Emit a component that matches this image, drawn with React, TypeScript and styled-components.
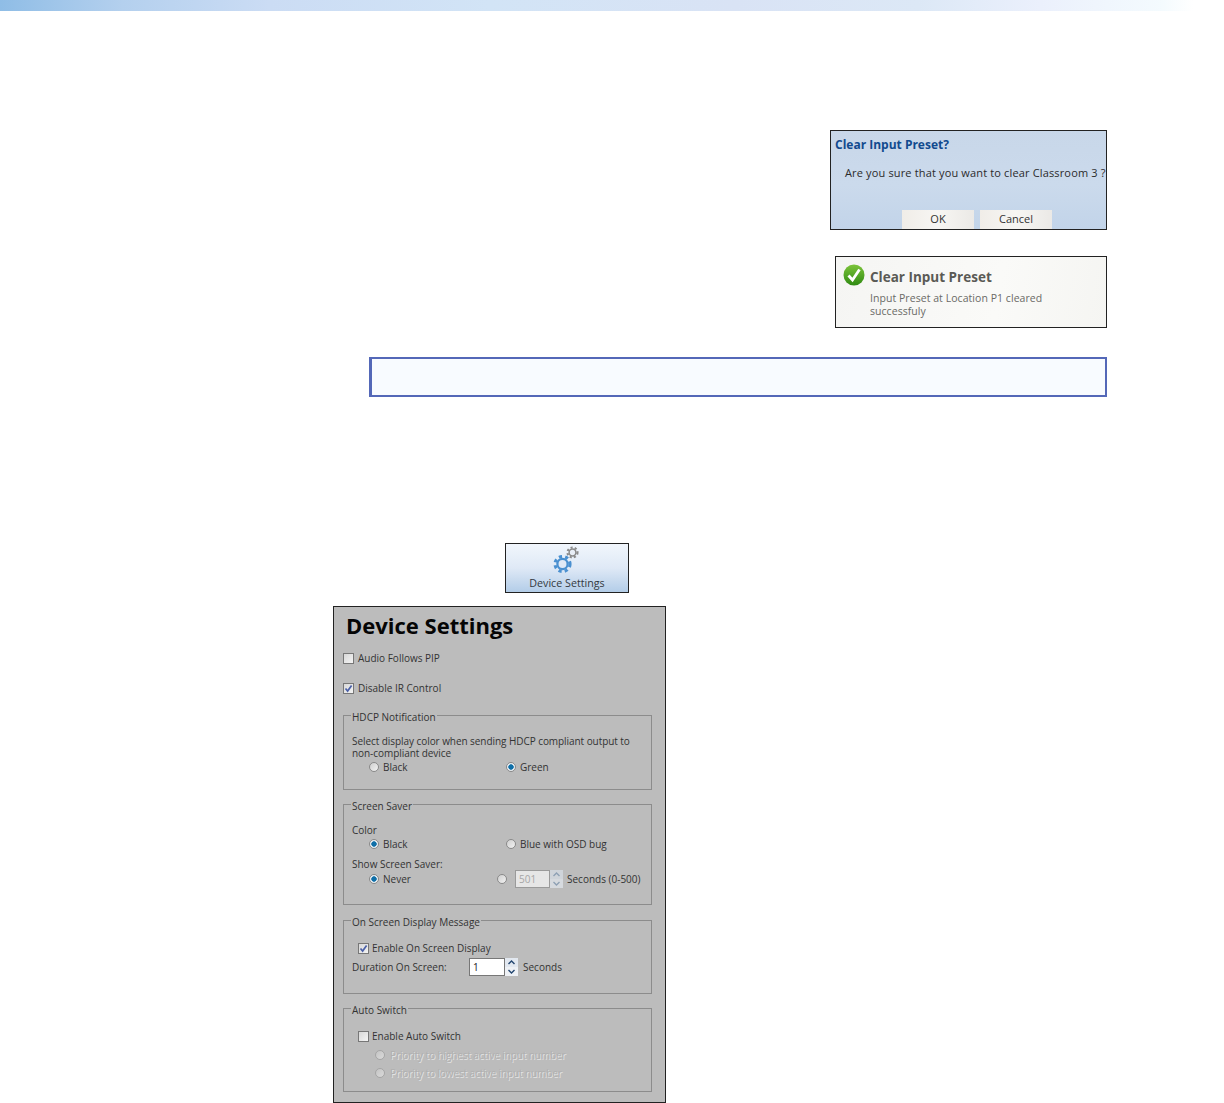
import React from 'react';
import styled, { createGlobalStyle } from 'styled-components';

const Global = createGlobalStyle`
  html, body { margin: 0; padding: 0; background: #fff; }
  body { font-family: "Open Sans", "DejaVu Sans", sans-serif; overflow: hidden; }
`;

const Page = styled.div`
  display: flex;
  flex-direction: column;
  height: 1103px;
`;
const TopBand = styled.div`
  height: 11px;
  background: linear-gradient(90deg, #8fbde6 0%, #b4d0ee 10%, #cbdcf4 22%, #d2e4f6 40%, #d9e3f5 60%, #dce8f6 75%, #ebf0fc 85%, #f4fbfe 95%, #fff 97.5%);
`;
const Dialog = styled.div`
  box-sizing: border-box;
  align-self: flex-end;
  margin: 119px 117px 0 0;
  width: 277px;
  height: 100px;
  border: 1px solid #222;
  background: linear-gradient(180deg, #c8d7e9 0%, #cbdaec 55%, #c2d4e9 100%);
  overflow: hidden;
  white-space: nowrap;
`;
const DialogTitle = styled.div`
  margin: 6px 0 0 4px;
  font-size: 12px;
  line-height: 15px;
  font-weight: 700;
  color: #124a8e;
`;
const DialogText = styled.div`
  margin: 14px 0 0 14px;
  font-size: 11px;
  line-height: 14px;
  letter-spacing: 0.15px;
  color: #2b2b2b;
`;
const DialogActions = styled.div`
  display: flex;
  gap: 6px;
  margin: 30px 0 0 71px;
`;
const DialogButton = styled.div`
  box-sizing: border-box;
  width: 72px;
  height: 20px;
  padding-bottom: 3px;
  display: flex;
  align-items: center;
  justify-content: center;
  font-size: 11px;
  color: #333;
  background: linear-gradient(90deg, #f0ede8 0%, #f7f6f3 50%, #ebe9e6 100%);
`;
const Toast = styled.div`
  box-sizing: border-box;
  align-self: flex-end;
  margin: 26px 117px 0 0;
  width: 272px;
  height: 72px;
  border: 1px solid #222;
  background: linear-gradient(100deg, #f5f5f3 0%, #fafaf8 60%, #f5f5f2 100%);
  display: grid;
  grid-template-columns: 27px 1fr;
  padding: 7px 0 0 7px;
`;
const ToastBody = styled.div`
  padding-top: 5px;
`;
const ToastTitle = styled.div`
  font-size: 13.5px;
  line-height: 16px;
  font-weight: 700;
  color: #5a5a55;
`;
const ToastText = styled.div`
  margin-top: 7px;
  width: 190px;
  font-size: 10.5px;
  line-height: 13px;
  letter-spacing: 0.05px;
  color: #6a6a66;
`;
const Note = styled.div`
  box-sizing: border-box;
  margin: 29px 117px 0 369px;
  height: 40px;
  border: solid #5468b8;
  border-width: 2px 2px 2px 3px;
  background: #f8fbff;
`;
const DeviceTab = styled.div`
  box-sizing: border-box;
  margin: 146px 0 0 505px;
  width: 124px;
  height: 50px;
  border: 1px solid #222;
  background: linear-gradient(180deg, #f1f6fc 0%, #dfe9f6 50%, #b3cde8 100%);
  display: flex;
  flex-direction: column;
  align-items: center;
  font-size: 10.7px;
  line-height: 12px;
  color: #33393f;
`;
const TabIcon = styled.svg`
  width: 32px;
  height: 30px;
  margin: 2px 3px 1px 0;
`;
const Panel = styled.div`
  box-sizing: border-box;
  margin: 13px 0 0 333px;
  width: 333px;
  height: 497px;
  border: 1px solid #222;
  background: #bcbcbc;
  padding: 4px 13px 0 9px;
  display: flex;
  flex-direction: column;
  color: #333;
  font-size: 10px;
  line-height: 12px;
`;
const Heading = styled.h1`
  margin: 0 0 0 3px;
  height: 30px;
  font-size: 22px;
  line-height: 28px;
  font-weight: 700;
  color: #050505;
`;
const TopOption = styled.label<{ $mt: number }>`
  display: flex;
  align-items: center;
  gap: 4px;
  height: 12px;
  margin-top: ${p => p.$mt}px;
`;
const Group = styled.fieldset<{ $mt: number; $pb: number }>`
  margin: ${p => p.$mt}px 0 0;
  padding: 0 8px ${p => p.$pb}px;
  border: 1px solid #8c8c8c;
  min-width: 0;
`;
const GroupTitle = styled.legend`
  padding: 4px 1px 0;
  margin-left: -1px;
  line-height: 12px;
  height: 16px;
  box-sizing: border-box;
`;
const Line = styled.div<{ $mt?: number }>`
  margin-top: ${p => p.$mt ?? 0}px;
  line-height: 12px;
`;
const WrappedLine = styled(Line)`
  letter-spacing: -0.06px;
`;
const ChoiceGrid = styled.div<{ $mt?: number }>`
  display: grid;
  grid-template-columns: 137px 1fr;
  align-items: center;
  padding-left: 17px;
  height: 12px;
  margin-top: ${p => p.$mt ?? 0}px;
`;
const Choice = styled.span`
  display: flex;
  align-items: center;
  gap: 4px;
`;
const CheckRow = styled.label<{ $mt?: number }>`
  display: flex;
  align-items: center;
  gap: 3px;
  height: 12px;
  padding-left: 6px;
  margin-top: ${p => p.$mt ?? 0}px;
`;
const SubChoice = styled.span<{ $mt?: number }>`
  display: flex;
  align-items: center;
  gap: 5px;
  height: 12px;
  padding-left: 23px;
  margin-top: ${p => p.$mt ?? 0}px;
`;
const Faded = styled.span`
  color: #b0b0b0;
  letter-spacing: -0.1px;
  text-shadow: 1px 1px 0 #e4e4e4;
`;
const Box = styled.span<{ $on?: boolean }>`
  box-sizing: border-box;
  flex: none;
  width: 11px;
  height: 11px;
  border: 1px solid #777;
  background: linear-gradient(135deg, #d8d8d8, #f4f4f4);
  display: flex;
  align-items: center;
  justify-content: center;
  svg { display: ${p => (p.$on ? 'block' : 'none')}; }
`;
const Round = styled.span<{ $on?: boolean; $off?: boolean }>`
  box-sizing: border-box;
  flex: none;
  width: 10px;
  height: 10px;
  border-radius: 50%;
  border: 1px solid ${p => (p.$off ? '#a5a5a5' : '#8a8a8a')};
  background: ${p =>
    p.$on
      ? 'radial-gradient(circle, #0f6fa8 0 2.4px, #e9eef2 3px)'
      : p.$off
      ? 'linear-gradient(135deg, #c4c4c4, #dadada)'
      : 'linear-gradient(135deg, #cfcfcf, #f2f2f2)'};
`;
const SpinRow = styled.div<{ $pl?: number; $mt?: number }>`
  display: flex;
  align-items: center;
  height: 18px;
  padding-left: ${p => p.$pl ?? 0}px;
  margin-top: ${p => p.$mt ?? 0}px;
`;
const NumberBox = styled.span<{ $w: number; $dim?: boolean }>`
  box-sizing: border-box;
  width: ${p => p.$w}px;
  height: 18px;
  padding-left: 3px;
  margin-left: ${p => (p.$dim ? 8 : 0)}px;
  border: 1px solid ${p => (p.$dim ? '#9a9a9a' : '#777')};
  background: ${p => (p.$dim ? '#e6e6e6' : '#fff')};
  color: ${p => (p.$dim ? '#a5a5a5' : '#222')};
  line-height: 16px;
`;
const Spinner = styled.svg<{ $gap: number }>`
  width: 13px;
  height: 18px;
  margin-right: ${p => p.$gap}px;
`;
const NeverChoice = styled(Choice)`
  width: 128px;
`;
const DurationLabel = styled.span`
  width: 117px;
`;

const Tick = () => (
  <svg width="9" height="9" viewBox="0 0 9 9">
    <path d="M1.5 4.5 L3.6 7 L7.6 1.5" fill="none" stroke="#4b60a8" strokeWidth="1.7" />
  </svg>
);

const Spin = ({ dim }: { dim?: boolean }) => (
  <Spinner viewBox="0 0 13 18" $gap={dim ? 4 : 5}>
    <rect x="0" y="0" width="13" height="9" fill={dim ? '#cfd4da' : '#e2e8f0'} />
    <rect x="0" y="9" width="13" height="9" fill={dim ? '#d6dadf' : '#eef1f5'} />
    <path d="M3.5 6 L6.5 3 L9.5 6" fill="none" stroke={dim ? '#8ea0b4' : '#22456f'} strokeWidth="1.4" />
    <path d="M3.5 12 L6.5 15 L9.5 12" fill="none" stroke={dim ? '#8ea0b4' : '#22456f'} strokeWidth="1.4" />
  </Spinner>
);

const Gear = ({ cx, cy, r, color, hole }: { cx: number; cy: number; r: number; color: string; hole: string }) => (
  <g>
    <circle cx={cx} cy={cy} r={r} fill="none" stroke={color} strokeWidth={r * 0.42} strokeDasharray={`${r * 0.42} ${r * 0.42}`} />
    <circle cx={cx} cy={cy} r={r * 0.68} fill={hole} stroke={color} strokeWidth={r * 0.3} />
  </g>
);

export default function App() {
  return (
    <Page>
      <Global />
      <TopBand />
      <Dialog>
        <DialogTitle>Clear Input Preset?</DialogTitle>
        <DialogText>Are you sure that you want to clear Classroom 3 ?</DialogText>
        <DialogActions>
          <DialogButton>OK</DialogButton>
          <DialogButton>Cancel</DialogButton>
        </DialogActions>
      </Dialog>
      <Toast>
        <svg width="22" height="22" viewBox="0 0 22 22">
          <defs>
            <linearGradient id="okGreen" x1="0" y1="0" x2="0" y2="1">
              <stop offset="0" stopColor="#7cc43a" />
              <stop offset="1" stopColor="#2f8a12" />
            </linearGradient>
          </defs>
          <circle cx="11" cy="11" r="10.5" fill="url(#okGreen)" />
          <path d="M5.5 11.5 L9.5 16 L16.5 5.5" fill="none" stroke="#fff" strokeWidth="2.8" />
        </svg>
        <ToastBody>
          <ToastTitle>Clear Input Preset</ToastTitle>
          <ToastText>Input Preset at Location P1 cleared successfuly</ToastText>
        </ToastBody>
      </Toast>
      <Note />
      <DeviceTab>
        <TabIcon viewBox="0 0 32 30">
          <Gear cx={22.5} cy={6.5} r={5} color="#8a8a8a" hole="#e8eef6" />
          <Gear cx={12.5} cy={18} r={7.5} color="#4a90d0" hole="#dfe9f6" />
        </TabIcon>
        Device Settings
      </DeviceTab>
      <Panel>
        <Heading>Device Settings</Heading>
        <TopOption $mt={11}><Box />Audio Follows PIP</TopOption>
        <TopOption $mt={18}><Box $on><Tick /></Box>Disable IR Control</TopOption>

        <Group $mt={13} $pb={16}>
          <GroupTitle>HDCP Notification</GroupTitle>
          <WrappedLine $mt={12}>
            Select display color when sending HDCP compliant output to<br />non-compliant device
          </WrappedLine>
          <ChoiceGrid $mt={2}>
            <Choice><Round />Black</Choice>
            <Choice><Round $on />Green</Choice>
          </ChoiceGrid>
        </Group>

        <Group $mt={6} $pb={16}>
          <GroupTitle>Screen Saver</GroupTitle>
          <Line $mt={12}>Color</Line>
          <ChoiceGrid $mt={2}>
            <Choice><Round $on />Black</Choice>
            <Choice><Round />Blue with OSD bug</Choice>
          </ChoiceGrid>
          <Line $mt={8}>Show Screen Saver:</Line>
          <SpinRow $pl={17}>
            <NeverChoice><Round $on />Never</NeverChoice>
            <Round />
            <NumberBox $w={35} $dim>501</NumberBox>
            <Spin dim />
            Seconds (0-500)
          </SpinRow>
        </Group>

        <Group $mt={7} $pb={17}>
          <GroupTitle>On Screen Display Message</GroupTitle>
          <CheckRow $mt={14}><Box $on><Tick /></Box>Enable On Screen Display</CheckRow>
          <SpinRow $mt={4}>
            <DurationLabel>Duration On Screen:</DurationLabel>
            <NumberBox $w={36}>1</NumberBox>
            <Spin />
            Seconds
          </SpinRow>
        </Group>

        <Group $mt={6} $pb={12}>
          <GroupTitle>Auto Switch</GroupTitle>
          <CheckRow $mt={14}><Box />Enable Auto Switch</CheckRow>
          <SubChoice $mt={7}><Round $off /><Faded>Priority to highest active input number</Faded></SubChoice>
          <SubChoice $mt={6}><Round $off /><Faded>Priority to lowest active input number</Faded></SubChoice>
        </Group>
      </Panel>
    </Page>
  );
}
